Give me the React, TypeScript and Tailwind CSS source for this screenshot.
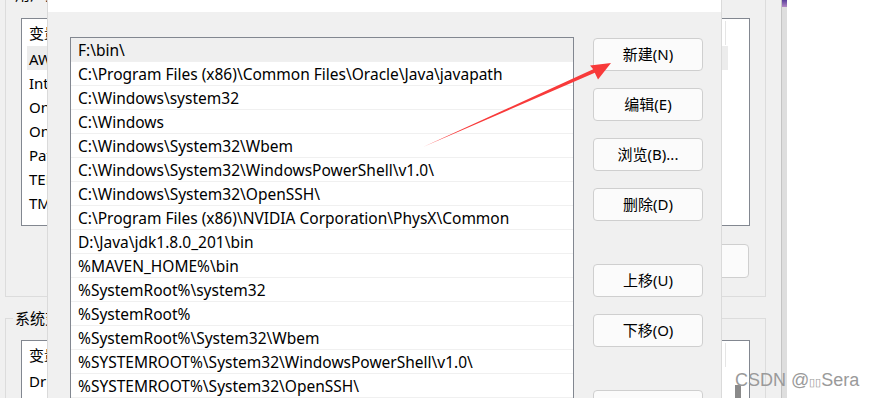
import React from "react";

const FONT = { fontFamily: '"Noto Sans", "Noto Sans CJK SC", sans-serif' };

const pathItems = [
  "F:\\bin\\",
  "C:\\Program Files (x86)\\Common Files\\Oracle\\Java\\javapath",
  "C:\\Windows\\system32",
  "C:\\Windows",
  "C:\\Windows\\System32\\Wbem",
  "C:\\Windows\\System32\\WindowsPowerShell\\v1.0\\",
  "C:\\Windows\\System32\\OpenSSH\\",
  "C:\\Program Files (x86)\\NVIDIA Corporation\\PhysX\\Common",
  "D:\\Java\\jdk1.8.0_201\\bin",
  "%MAVEN_HOME%\\bin",
  "%SystemRoot%\\system32",
  "%SystemRoot%",
  "%SystemRoot%\\System32\\Wbem",
  "%SYSTEMROOT%\\System32\\WindowsPowerShell\\v1.0\\",
  "%SYSTEMROOT%\\System32\\OpenSSH\\",
  "%JAVA_HOME%\\bin",
];

const userVars = ["AWS_HOME", "IntelliJ IDEA", "OneDrive", "OneDriveConsumer", "Path", "TEMP", "TMP"];

const WinButton = ({ label, className = "" }: { label: string; className?: string }) => (
  <button
    className={`h-[33px] w-[110px] shrink-0 rounded-[4px] border border-[#cfcfcf] bg-[#fbfbfb] text-[15px] text-black ${className}`}
  >
    {label}
  </button>
);

// 뒤쪽 창의 변수 목록
const VarList = ({ rows, height, selected }: { rows: string[]; height: string; selected?: number }) => (
  <div className={`ml-[15px] w-[729px] ${height} overflow-hidden border border-[#828790] bg-white`}>
    <div className="flex h-[27px] items-center">
      <div className="flex h-[24px] w-[704px] items-center border-r border-[#e5e5e5] pl-[7px] pt-[2px]">变量</div>
    </div>
    {rows.map((r, i) => (
      <div
        key={r}
        className={`ml-[5px] mr-[21px] flex h-[24px] items-center pl-[2px] pt-[2px] ${i === selected ? "bg-[#ececec]" : ""}`}
      >
        {r}
      </div>
    ))}
  </div>
);

export default function App() {
  return (
    <div className="relative h-[398px] w-[874px] overflow-hidden bg-white text-[15px] text-black" style={FONT}>
      {/* 뒤쪽 환경 변수 창 */}
      <div className="absolute left-0 top-0 flex h-full w-[781px] flex-col bg-[#f0f0f0]">
        <fieldset className="-mt-[16px] ml-[5px] h-[313px] w-[761px] shrink-0 border border-[#dcdcdc]">
          <legend className="ml-[7px] px-[2px] leading-[20px]">用户变量</legend>
          <div className="mt-[14px]">
            <VarList rows={userVars} height="h-[208px]" selected={0} />
          </div>
          <div className="mt-[18px] flex justify-end pr-[16px]">
            <button className="h-[34px] w-[110px] rounded-[4px] border border-[#cfcfcf] bg-[#fbfbfb]">删除(L)</button>
          </div>
        </fieldset>
        <fieldset className="ml-[5px] mt-[11px] h-[120px] w-[761px] shrink-0 border border-[#dcdcdc]">
          <legend className="ml-[7px] px-[2px] leading-[20px]">系统变量(S)</legend>
          <div className="mt-[12px] flex">
            <VarList rows={["DriverData", "JAVA_HOME"]} height="h-[80px]" />
          </div>
        </fieldset>
      </div>

      {/* 뒤쪽 창 스크롤바 */}
      <div className="absolute left-[735px] top-[385px] h-[20px] w-[6px] bg-[#8a8a8a]" />
      <div className="absolute left-[781px] top-0 h-full w-[6px] border-l border-[#c4c4c4] bg-[#dedede]">
        <div className="h-[7px] bg-gradient-to-b from-[#5b3f9a] to-[#b487c6]" />
      </div>

      {/* 편집 환경 변수 대화상자 */}
      <div className="absolute left-[47px] top-0 flex h-full w-[675px] flex-col border-x border-[#dadada] bg-[#f0f0f0]">
        <div className="h-[12px] shrink-0 bg-white" />
        <div className="flex min-h-0 flex-1">
          <div className="ml-[22px] mt-[25px] w-[504px] shrink-0 border border-[#828790] bg-white text-[15.5px]">
            {pathItems.map((p, i) => (
              <div
                key={p}
                className={`flex h-[24px] items-center border-b border-[#f0f0f0] pl-[7px] pt-[3px] whitespace-nowrap ${
                  i === 0 ? "bg-[#efefef]" : ""
                }`}
              >
                {p}
              </div>
            ))}
          </div>
          <div className="ml-[19px] mt-[26px] flex flex-col gap-[17px]">
            <WinButton label="新建(N)" />
            <WinButton label="编辑(E)" />
            <WinButton label="浏览(B)..." />
            <WinButton label="删除(D)" />
            <WinButton label="上移(U)" className="mt-[26px]" />
            <WinButton label="下移(O)" />
            <WinButton label="编辑文本(T)..." className="mt-[26px]" />
          </div>
        </div>
      </div>

      {/* 빨간 화살표 */}
      <svg className="pointer-events-none absolute left-0 top-0" width="874" height="398" viewBox="0 0 874 398">
        <polygon points="423,147 593.2,69.2 590,65.5 611,63 598,79.5 594.8,72.8" fill="#f83a3a" />
      </svg>

      {/* 워터마크 */}
      <div
        className="absolute left-[735px] top-[368px] text-[18px] leading-[24px] text-[#9a9a9a]"
        style={{ fontFamily: '"Liberation Sans", sans-serif' }}
      >
        CSDN @<span className="text-[11px]">▯▯</span>Sera
      </div>
    </div>
  );
}
